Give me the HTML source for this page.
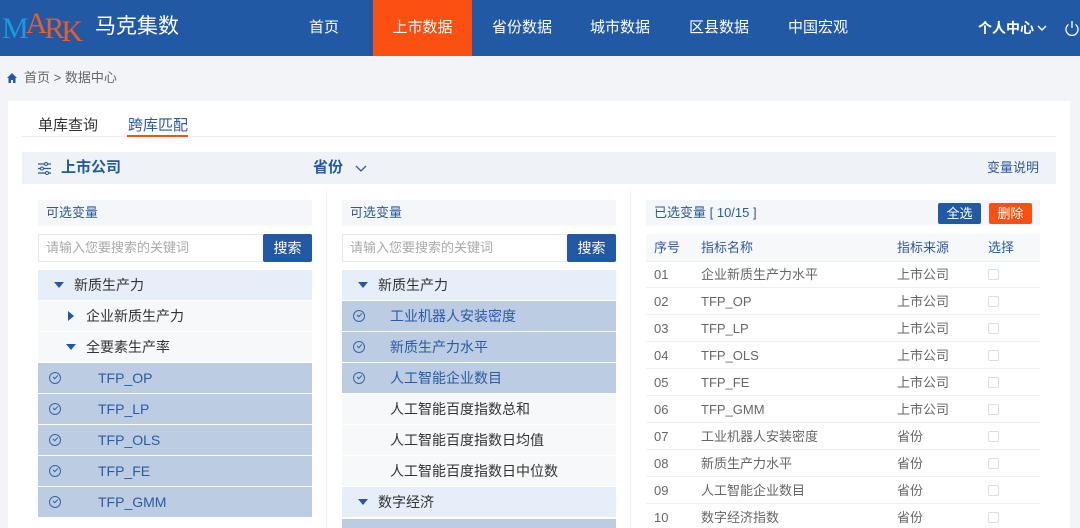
<!DOCTYPE html>
<html style="overflow:hidden;width:1080px;height:528px"><head><meta charset="utf-8"><style>
*{margin:0;padding:0;box-sizing:border-box}
body{width:1080px;height:528px;overflow:hidden;background:#f3f4f7;font-family:"Liberation Sans","Noto Sans CJK SC",sans-serif;position:relative;color:#333}
.abs{position:absolute}
.hdr{left:0;top:0;width:1080px;height:56px;background:#2159a5}
.nav{top:0;height:56px;line-height:56px;color:#fff;font-size:15px;text-align:center}
.card{left:8px;top:101px;width:1062px;height:427px;background:#fff}
.row{position:absolute;height:30px;line-height:30px;font-size:14px}
.sel{background:#bccde3;color:#2a5aa0}
.grp{background:#e6eef9;color:#333}
.plain{background:#f7f8fa;color:#333}
.chk{position:absolute;left:11px;top:9px;width:12px;height:12px;border:1.3px solid #3a62a0;border-radius:50%}
.chk:after{content:"";position:absolute;left:2.5px;top:2px;width:4px;height:2px;border-left:1.3px solid #3a62a0;border-bottom:1.3px solid #3a62a0;transform:rotate(-45deg)}
.tri{position:absolute;width:0;height:0;border-left:5px solid transparent;border-right:5px solid transparent;border-top:6px solid #2159a5;top:12px}
.trr{position:absolute;width:0;height:0;border-top:5px solid transparent;border-bottom:5px solid transparent;border-left:6px solid #2159a5;top:10px}
.sub{height:26px;line-height:26px;background:#f4f6f9;font-size:13px;color:#2c5a9c;padding-left:8px}
.inp{height:28px;border:1px solid #e6e8ec;font-size:13px;color:#aaa;line-height:26px;padding-left:7px;background:#fff}
.btn{background:#2159a5;color:#fff;font-size:14px;text-align:center;line-height:28px;border-radius:2px}
.tr{position:absolute;left:646px;width:394px;height:27px;line-height:27px;font-size:13px;color:#666;border-bottom:1px solid #eef0f3}
.tr span{position:absolute}
.cb{position:absolute;left:342px;top:8px;width:11px;height:11px;border:1px solid #ddd;border-radius:2px}
</style></head><body>
<div class="abs hdr"></div>
<div class="abs" style="left:2px;top:12px;font-family:'Liberation Serif',serif;font-size:30px;letter-spacing:-3px;line-height:34px;white-space:nowrap"><span style="color:#1a9be0">M</span><span style="color:#f05a23;position:relative;top:-5px">A</span><span style="color:#f05a23">R</span><span style="color:#f05a23;position:relative;top:3px">K</span></div>
<div class="abs" style="left:95px;top:13px;color:#fff;font-size:21px;line-height:28px">马克集数</div>
<div class="abs nav" style="left:300px;width:48px">首页</div>
<div class="abs nav" style="left:373px;width:99px;background:#fc4f12">上市数据</div>
<div class="abs nav" style="left:485px;width:74px">省份数据</div>
<div class="abs nav" style="left:583px;width:74px">城市数据</div>
<div class="abs nav" style="left:682px;width:74px">区县数据</div>
<div class="abs nav" style="left:781px;width:74px">中国宏观</div>
<div class="abs nav" style="left:978px;width:60px;font-weight:bold;font-size:14px;text-align:left">个人中心</div>
<svg class="abs" style="left:1036px;top:23px" width="12" height="10"><path d="M2 3l4 4 4-4" stroke="#fff" stroke-width="1.5" fill="none"/></svg>
<svg class="abs" style="left:1064px;top:20px" width="16" height="17"><path d="M4.5 4.5A6 6 0 1 0 11.5 4.5M8 1v7" stroke="#fff" stroke-width="1.3" fill="none"/></svg>
<svg class="abs" style="left:7px;top:73px" width="10" height="10"><path d="M5 0L0 5h1.5v5h2.5V7h2v3h2.5V5H10z" fill="#2159a5"/></svg>
<div class="abs" style="left:24px;top:69px;font-size:13px;color:#666;line-height:18px">首页 &gt; 数据中心</div>
<div class="abs card"></div>
<div class="abs" style="left:38px;top:114px;font-size:15px;color:#333">单库查询</div>
<div class="abs" style="left:128px;top:114px;font-size:15px;color:#2c5a9c">跨库匹配</div>
<div class="abs" style="left:22px;top:136px;width:1034px;height:1px;background:#eceef2"></div>
<div class="abs" style="left:127px;top:135px;width:61px;height:2px;background:#fc4f12"></div>
<div class="abs" style="left:22px;top:152px;width:1034px;height:32px;background:#eff2f6"></div>
<svg class="abs" style="left:37px;top:161px" width="15" height="15"><g stroke="#2c5a9c" stroke-width="1.2"><path d="M1 3h13M1 7.5h13M1 12h13"/></g><g fill="#eff2f6" stroke="#2c5a9c"><circle cx="9" cy="3" r="1.5"/><circle cx="5" cy="7.5" r="1.5"/><circle cx="10" cy="12" r="1.5"/></g></svg>
<div class="abs" style="left:61px;top:158px;font-size:15px;font-weight:bold;color:#2159a5;line-height:20px">上市公司</div>
<div class="abs" style="left:313px;top:158px;font-size:15px;font-weight:bold;color:#2159a5;line-height:20px">省份</div>
<svg class="abs" style="left:355px;top:164px" width="12" height="9"><path d="M1 2l5 5 5-5" stroke="#2c5a9c" stroke-width="1.3" fill="none"/></svg>
<div class="abs" style="left:987px;top:158px;font-size:13px;color:#2c5a9c;line-height:20px">变量说明</div>
<div class="abs" style="left:326px;top:190px;width:1px;height:338px;background:#f0f1f4"></div>
<div class="abs" style="left:630px;top:190px;width:1px;height:338px;background:#f0f1f4"></div>

<div class="abs sub" style="left:38px;top:200px;width:274px">可选变量</div>
<div class="abs inp" style="left:38px;top:234px;width:226px">请输入您要搜索的关键词</div>
<div class="abs btn" style="left:263px;top:234px;width:49px">搜索</div>
<div class="row grp" style="left:38px;top:270px;width:274px"><i class="tri" style="left:16px"></i><span style="position:absolute;left:36px">新质生产力</span></div>
<div class="row plain" style="left:38px;top:301px;width:274px"><i class="trr" style="left:30px"></i><span style="position:absolute;left:48px">企业新质生产力</span></div>
<div class="row plain" style="left:38px;top:332px;width:274px"><i class="tri" style="left:28px"></i><span style="position:absolute;left:48px">全要素生产率</span></div>
<div class="row sel" style="left:38px;top:363px;width:274px"><i class="chk"></i><span style="position:absolute;left:60px">TFP_OP</span></div>
<div class="row sel" style="left:38px;top:394px;width:274px"><i class="chk"></i><span style="position:absolute;left:60px">TFP_LP</span></div>
<div class="row sel" style="left:38px;top:425px;width:274px"><i class="chk"></i><span style="position:absolute;left:60px">TFP_OLS</span></div>
<div class="row sel" style="left:38px;top:456px;width:274px"><i class="chk"></i><span style="position:absolute;left:60px">TFP_FE</span></div>
<div class="row sel" style="left:38px;top:487px;width:274px"><i class="chk"></i><span style="position:absolute;left:60px">TFP_GMM</span></div>

<div class="abs sub" style="left:342px;top:200px;width:274px">可选变量</div>
<div class="abs inp" style="left:342px;top:234px;width:226px">请输入您要搜索的关键词</div>
<div class="abs btn" style="left:567px;top:234px;width:49px">搜索</div>
<div class="row grp" style="left:342px;top:270px;width:274px"><i class="tri" style="left:16px"></i><span style="position:absolute;left:36px">新质生产力</span></div>
<div class="row sel" style="left:342px;top:301px;width:274px"><i class="chk"></i><span style="position:absolute;left:48px">工业机器人安装密度</span></div>
<div class="row sel" style="left:342px;top:332px;width:274px"><i class="chk"></i><span style="position:absolute;left:48px">新质生产力水平</span></div>
<div class="row sel" style="left:342px;top:363px;width:274px"><i class="chk"></i><span style="position:absolute;left:48px">人工智能企业数目</span></div>
<div class="row plain" style="left:342px;top:394px;width:274px"><span style="position:absolute;left:48px">人工智能百度指数总和</span></div>
<div class="row plain" style="left:342px;top:425px;width:274px"><span style="position:absolute;left:48px">人工智能百度指数日均值</span></div>
<div class="row plain" style="left:342px;top:456px;width:274px"><span style="position:absolute;left:48px">人工智能百度指数日中位数</span></div>
<div class="row grp" style="left:342px;top:487px;width:274px"><i class="tri" style="left:16px"></i><span style="position:absolute;left:36px">数字经济</span></div>
<div class="abs sel" style="left:342px;top:519px;width:274px;height:9px"></div>

<div class="abs sub" style="left:646px;top:200px;width:394px;color:#2c5a9c">已选变量 [ 10/15 ]</div>
<div class="abs" style="left:938px;top:203px;width:43px;height:21px;background:#2159a5;color:#fff;font-size:13px;line-height:21px;text-align:center;border-radius:2px">全选</div>
<div class="abs" style="left:989px;top:203px;width:43px;height:21px;background:#fc4f12;color:#fff;font-size:13px;line-height:21px;text-align:center;border-radius:2px">删除</div>
<div class="tr" style="top:234px;background:#f7f8fa;color:#2c5a9c;height:28px;line-height:28px"><span style="left:8px">序号</span><span style="left:55px">指标名称</span><span style="left:251px">指标来源</span><span style="left:342px">选择</span></div>
<div class="tr" style="top:261px"><span style="left:8px">01</span><span style="left:55px">企业新质生产力水平</span><span style="left:251px">上市公司</span><i class="cb"></i></div>
<div class="tr" style="top:288px"><span style="left:8px">02</span><span style="left:55px">TFP_OP</span><span style="left:251px">上市公司</span><i class="cb"></i></div>
<div class="tr" style="top:315px"><span style="left:8px">03</span><span style="left:55px">TFP_LP</span><span style="left:251px">上市公司</span><i class="cb"></i></div>
<div class="tr" style="top:342px"><span style="left:8px">04</span><span style="left:55px">TFP_OLS</span><span style="left:251px">上市公司</span><i class="cb"></i></div>
<div class="tr" style="top:369px"><span style="left:8px">05</span><span style="left:55px">TFP_FE</span><span style="left:251px">上市公司</span><i class="cb"></i></div>
<div class="tr" style="top:396px"><span style="left:8px">06</span><span style="left:55px">TFP_GMM</span><span style="left:251px">上市公司</span><i class="cb"></i></div>
<div class="tr" style="top:423px"><span style="left:8px">07</span><span style="left:55px">工业机器人安装密度</span><span style="left:251px">省份</span><i class="cb"></i></div>
<div class="tr" style="top:450px"><span style="left:8px">08</span><span style="left:55px">新质生产力水平</span><span style="left:251px">省份</span><i class="cb"></i></div>
<div class="tr" style="top:477px"><span style="left:8px">09</span><span style="left:55px">人工智能企业数目</span><span style="left:251px">省份</span><i class="cb"></i></div>
<div class="tr" style="top:504px;border-bottom:0"><span style="left:8px">10</span><span style="left:55px">数字经济指数</span><span style="left:251px">省份</span><i class="cb"></i></div>
</body></html>
